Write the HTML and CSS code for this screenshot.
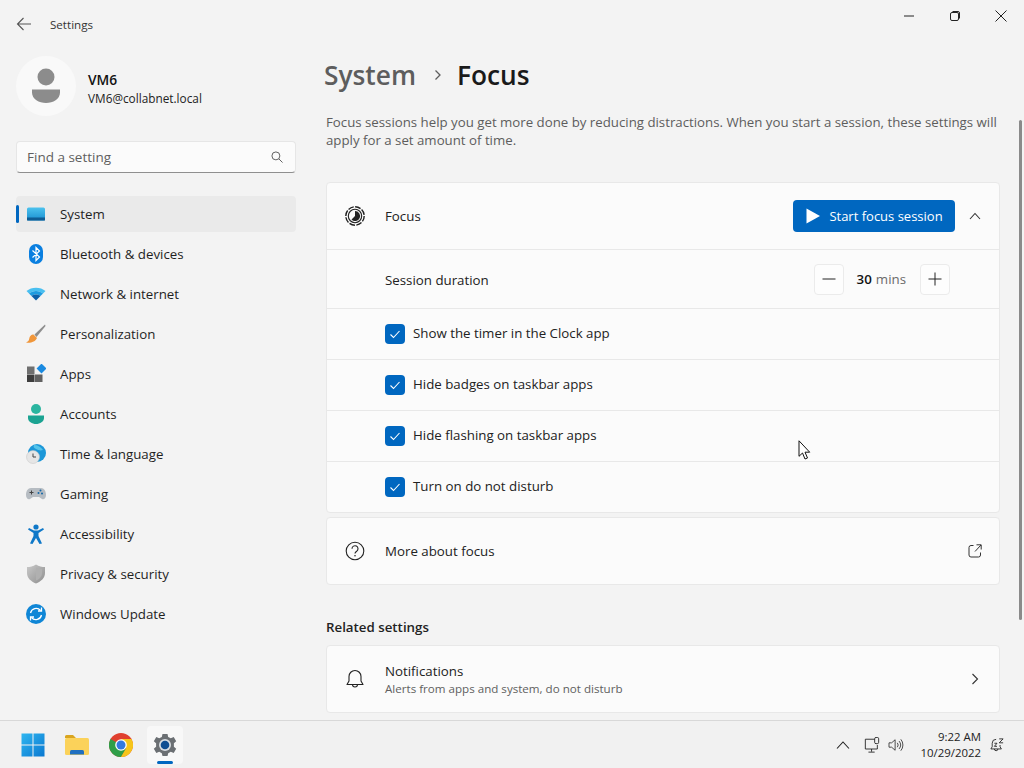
FILE: index.html
```html
<!DOCTYPE html>
<html lang="en">
<head>
<meta charset="utf-8">
<title>Settings</title>
<link rel="stylesheet" href="styles.css">
</head>
<body>
<div class="window">
  <header class="titlebar">
    <div class="title-left">
      <svg class="back" width="16" height="16" viewBox="0 0 16 16"><path d="M15 8H1.500M7.500 2L1.500 8l6 6" fill="none" stroke="#555" stroke-width="1.100"/></svg>
      <span class="app-name">Settings</span>
    </div>
    <div class="controls">
      <div class="ctl"><svg width="12" height="12" viewBox="0 0 12 12"><path d="M1 6h10" stroke="#222" stroke-width="1"/></svg></div>
      <div class="ctl"><svg width="12" height="12" viewBox="0 0 12 12"><rect x="1.500" y="2.500" width="8" height="8" rx="1.500" fill="none" stroke="#222"/><path d="M3.500 1.500h5.500a1.500 1.500 0 0 1 1.500 1.500v5.500" fill="none" stroke="#222"/></svg></div>
      <div class="ctl"><svg width="12" height="12" viewBox="0 0 12 12"><path d="M.5.500l11 11M11.500.500l-11 11" stroke="#222" stroke-width="1"/></svg></div>
    </div>
  </header>
  <div class="body">
    <aside class="sidebar">
      <div class="profile">
        <div class="avatar">
          <svg width="30" height="36" viewBox="0 0 30 36"><circle cx="15" cy="9" r="8.500" fill="#8c8c8c"/><path d="M1 21.500h28v3C29 31 22 35 15 35S1 31 1 24.500z" fill="#8c8c8c"/></svg>
        </div>
        <div class="who">
          <div class="who-name">VM6</div>
          <div class="who-mail">VM6@collabnet.local</div>
        </div>
      </div>
      <div class="search">
        <span class="search-text">Find a setting</span>
        <svg width="12" height="12" viewBox="0 0 13 13"><circle cx="5.300" cy="5.300" r="4.300" fill="none" stroke="#555"/><path d="M8.500 8.500l4 4" stroke="#555"/></svg>
      </div>
      <nav class="nav">
        <div class="nav-item active"><span class="pip"></span>
          <svg class="nav-icon" width="20" height="20" viewBox="0 0 20 20"><defs><linearGradient id="g1" x1="0" y1="0" x2="0" y2="1"><stop offset="0" stop-color="#4cc2ee"/><stop offset="1" stop-color="#1a8fd0"/></linearGradient></defs><rect x="1" y="3.500" width="18" height="13" rx="1.500" fill="url(#g1)"/><rect x="1" y="13.500" width="18" height="3" fill="#0f5c94"/></svg>
          <span>System</span></div>
        <div class="nav-item">
          <svg class="nav-icon" width="20" height="20" viewBox="0 0 20 20"><rect x="3" y="0" width="14" height="20" rx="7" fill="#0a7fe0"/><path d="M6.500 6.500l7 6.500L10 16.500V3.500l3.500 3.500-7 6.500" fill="none" stroke="#fff" stroke-width="1.200"/></svg>
          <span>Bluetooth &amp; devices</span></div>
        <div class="nav-item">
          <svg class="nav-icon" width="20" height="20" viewBox="0 0 20 20"><path d="M0.500 7C5.500 2.500 14.500 2.500 19.500 7l-2.500 2.500C13 6 7 6 3 9.500z" fill="#49bff0"/><path d="M3 9.500C7 6 13 6 17 9.500l-2.500 2.500C12 10 8 10 5.500 12z" fill="#1d9be0"/><path d="M5.500 12C8 10 12 10 14.500 12L10 16.500z" fill="#0c5fa8"/></svg>
          <span>Network &amp; internet</span></div>
        <div class="nav-item">
          <svg class="nav-icon" width="20" height="20" viewBox="0 0 20 20"><path d="M19 0.500L8.500 10.500l2 2.500L19.500 2z" fill="#8d8d8d"/><path d="M7.500 10.500l3.500 3.500C9.500 18 4 19.500 0 18.500c3-1 3-3 3.500-5 .5-2 2.500-3.500 4-3z" fill="#f0963a"/></svg>
          <span>Personalization</span></div>
        <div class="nav-item">
          <svg class="nav-icon" width="20" height="20" viewBox="0 0 20 20"><rect x="1" y="2.500" width="7.500" height="7.500" fill="#6f6f6f"/><rect x="1" y="10.500" width="7.500" height="7.500" fill="#3d3d3d"/><rect x="9" y="10.500" width="7.500" height="7.500" fill="#616161"/><rect x="12" y="1" width="7" height="7" transform="rotate(45 15.500 4.500)" fill="#1a8ae0"/></svg>
          <span>Apps</span></div>
        <div class="nav-item">
          <svg class="nav-icon" width="20" height="20" viewBox="0 0 20 20"><circle cx="10" cy="5" r="5" fill="#2bb5a0"/><path d="M2 11.500h16v2.500c0 3.500-4 6-8 6s-8-2.500-8-6z" fill="#1ba392"/></svg>
          <span>Accounts</span></div>
        <div class="nav-item">
          <svg class="nav-icon" width="20" height="20" viewBox="0 0 20 20"><circle cx="11" cy="9" r="9" fill="#1c97d8"/><path d="M8 1c4 0 7 2 9 5-3 1-5 0-7-1S7 3 8 1z" fill="#55c4ea"/><circle cx="7" cy="13" r="6.500" fill="#e6e6e6" stroke="#c4c4c4" stroke-width=".5"/><path d="M7 9.500V13h3" fill="none" stroke="#444" stroke-width="1"/></svg>
          <span>Time &amp; language</span></div>
        <div class="nav-item">
          <svg class="nav-icon" width="20" height="20" viewBox="0 0 20 20"><path d="M5 4h10c3 0 5 3 5 7 0 3-2 5-4 4l-3-2H7l-3 2c-2 1-4-1-4-4 0-4 2-7 5-7z" fill="#b6bcc2"/><path d="M3.500 8.500h4M5.500 6.500v4" stroke="#444" stroke-width="1"/><circle cx="14.500" cy="6.500" r="1" fill="#1267a8"/><circle cx="12.500" cy="9" r="1" fill="#1267a8"/><circle cx="16" cy="9.500" r="1" fill="#1267a8"/></svg>
          <span>Gaming</span></div>
        <div class="nav-item">
          <svg class="nav-icon" width="20" height="20" viewBox="0 0 20 20"><circle cx="10" cy="3" r="2.600" fill="#0f78c8"/><path d="M2 5.500l1-1.500 5 2.500h4l5-2.500 1 1.500-5.500 3.500v3L16 19.500l-2.500.5L10 14l-3.500 6-2.500-.5L7.500 12V9z" fill="#0f78c8"/></svg>
          <span>Accessibility</span></div>
        <div class="nav-item">
          <svg class="nav-icon" width="20" height="20" viewBox="0 0 20 20"><defs><linearGradient id="g2" x1="0" y1="0" x2="1" y2="1"><stop offset="0" stop-color="#c9c9c9"/><stop offset="1" stop-color="#8e8e8e"/></linearGradient></defs><path d="M10 0.500c3 2 6 2.500 9 2.500v6c0 5-4 8.500-9 10.500C5 17.500 1 14 1 9V3c3 0 6-.5 9-2.500z" fill="url(#g2)"/><path d="M10 3.500c2 1 4 1.500 6 1.500v4c0 3.500-2.500 6-6 7.500z" fill="#b0b0b0"/></svg>
          <span>Privacy &amp; security</span></div>
        <div class="nav-item">
          <svg class="nav-icon" width="20" height="20" viewBox="0 0 20 20"><circle cx="10" cy="10" r="10" fill="#0f86d6"/><path d="M4.500 9a5.700 5.700 0 0 1 10-2.500M15.500 11a5.700 5.700 0 0 1-10 2.500" fill="none" stroke="#fff" stroke-width="1.300"/><path d="M15.500 3.500v3.500H12M4.500 16.500V13H8" fill="none" stroke="#fff" stroke-width="1.300"/></svg>
          <span>Windows Update</span></div>
      </nav>
    </aside>
    <main class="main">
      <h1 class="crumbs"><span class="crumb-parent">System</span>
        <svg class="crumb-sep" width="10" height="12" viewBox="0 0 10 12"><path d="M2.500 1.500L7 6l-4.500 4.500" fill="none" stroke="#5d5d5d" stroke-width="1.300"/></svg>
        <span class="crumb-current">Focus</span></h1>
      <p class="desc">Focus sessions help you get more done by reducing distractions. When you start a session, these settings will apply for a set amount of time.</p>
      <section class="card">
        <div class="row row-head">
          <svg class="row-icon" width="20" height="20" viewBox="0 0 20 20"><circle cx="10" cy="10" r="9.200" fill="none" stroke="#222" stroke-width="1.400" stroke-dasharray="5.800 1.400"/><circle cx="10" cy="10" r="6.700" fill="none" stroke="#222" stroke-width="1.100"/><path d="M10 5a5 5 0 1 1-3.500 8.500L10 10z" fill="#222"/></svg>
          <span class="row-label">Focus</span>
          <button class="primary"><svg width="16" height="16" viewBox="0 0 16 16"><path d="M1.500 .5l13.500 7.500-13.500 7.500z" fill="#fff"/></svg>Start focus session</button>
          <svg class="chev-up" width="12" height="8" viewBox="0 0 12 8"><path d="M1 7l5-5.500L11 7" fill="none" stroke="#333" stroke-width="1.100"/></svg>
        </div>
        <div class="row row-duration">
          <span class="row-label">Session duration</span>
          <div class="stepper">
            <div class="step"><svg width="14" height="14" viewBox="0 0 14 14"><path d="M0.500 7h13" stroke="#222"/></svg></div>
            <span class="num">30</span><span class="unit">mins</span>
            <div class="step"><svg width="14" height="14" viewBox="0 0 14 14"><path d="M0.500 7h13M7 .5v13" stroke="#222"/></svg></div>
          </div>
        </div>
        <div class="row row-check"><span class="box"><svg width="12" height="12" viewBox="0 0 12 12"><path d="M1.500 6.500l3 3 6-6.500" fill="none" stroke="#fff" stroke-width="1.100"/></svg></span><span class="row-label">Show the timer in the Clock app</span></div>
        <div class="row row-check"><span class="box"><svg width="12" height="12" viewBox="0 0 12 12"><path d="M1.500 6.500l3 3 6-6.500" fill="none" stroke="#fff" stroke-width="1.100"/></svg></span><span class="row-label">Hide badges on taskbar apps</span></div>
        <div class="row row-check"><span class="box"><svg width="12" height="12" viewBox="0 0 12 12"><path d="M1.500 6.500l3 3 6-6.500" fill="none" stroke="#fff" stroke-width="1.100"/></svg></span><span class="row-label">Hide flashing on taskbar apps</span></div>
        <div class="row row-check"><span class="box"><svg width="12" height="12" viewBox="0 0 12 12"><path d="M1.500 6.500l3 3 6-6.500" fill="none" stroke="#fff" stroke-width="1.100"/></svg></span><span class="row-label">Turn on do not disturb</span></div>
      </section>
      <section class="card card-more">
        <div class="row row-link">
          <svg class="row-icon" width="20" height="20" viewBox="0 0 20 20"><circle cx="10" cy="10" r="8.800" fill="none" stroke="#222" stroke-width="1.100"/><path d="M7 7.700a3 3 0 1 1 4.700 2.500c-1.100.7-1.700 1.300-1.700 2.300" fill="none" stroke="#222" stroke-width="1.100"/><circle cx="10" cy="14.800" r=".8" fill="#222"/></svg>
          <span class="row-label">More about focus</span>
          <svg class="tail" width="14" height="14" viewBox="0 0 14 14"><path d="M5.500 1.500H3A2 2 0 0 0 1 3.500V11a2 2 0 0 0 2 2h7.500a2 2 0 0 0 2-2V8.500" fill="none" stroke="#333" stroke-width="1"/><path d="M7 7.500L13 1M8.500 .8h4.700v4.700" fill="none" stroke="#333" stroke-width="1"/></svg>
        </div>
      </section>
      <h2 class="section-title">Related settings</h2>
      <section class="card">
        <div class="row row-link">
          <svg class="row-icon" width="20" height="20" viewBox="0 0 20 20"><path d="M10 1.500a6 6 0 0 0-6 6v4.500L2 15.500h16L16 12V7.500a6 6 0 0 0-6-6z" fill="none" stroke="#222" stroke-width="1.100" stroke-linejoin="round"/><path d="M7.500 15.500a2.500 2.500 0 0 0 5 0" fill="none" stroke="#222" stroke-width="1.100"/></svg>
          <div class="stack">
            <span class="row-label">Notifications</span>
            <span class="row-sub">Alerts from apps and system, do not disturb</span>
          </div>
          <svg class="tail tail-chev" width="8" height="12" viewBox="0 0 8 12"><path d="M1.500 1L6.500 6l-5 5" fill="none" stroke="#333" stroke-width="1.100"/></svg>
        </div>
      </section>
    </main>
  </div>
  <div class="scrollbar"></div>
  <svg class="cursor" width="13" height="20" viewBox="0 0 13 20"><path d="M1 .8v15.500l3.500-3.300 2.500 6 2.500-1-2.500-5.800h4.700z" fill="#fff" stroke="#111" stroke-width="1"/></svg>
</div>
<footer class="taskbar">
  <div class="apps">
    <div class="app"><svg width="24" height="24" viewBox="0 0 24 24"><defs><linearGradient id="g3" x1="0" y1="0" x2="1" y2="1"><stop offset="0" stop-color="#2fb6f0"/><stop offset="1" stop-color="#0a78d0"/></linearGradient></defs><path d="M.5.500h11v11H.500zM12.500.500h11v11h-11zM.5 12.500h11v11H.500zM12.500 12.500h11v11h-11z" fill="url(#g3)"/></svg></div>
    <div class="app"><svg width="26" height="22" viewBox="0 0 26 22"><path d="M1 2.500A1.500 1.500 0 0 1 2.500 1H9l3 3h-11z" fill="#d9a520"/><rect x="1" y="4" width="24" height="17" rx="1.500" fill="#fbd25a"/><path d="M6 20.500v-3A1.500 1.500 0 0 1 7.500 16h11a1.500 1.500 0 0 1 1.500 1.500v3z" fill="#1f6fc0"/></svg></div>
    <div class="app"><svg width="24" height="24" viewBox="0 0 24 24"><circle cx="12" cy="12" r="12" fill="#e0402f"/><path d="M12 12L1.600 6A12 12 0 0 0 12 24l5-8z" fill="#2f9e48"/><path d="M12 6h10.400A12 12 0 0 1 12 24l5.200-9z" fill="#f6c51a"/><circle cx="12" cy="12" r="5.800" fill="#fff"/><circle cx="12" cy="12" r="4.500" fill="#3279e0"/></svg></div>
    <div class="app app-on">
      <svg width="24" height="24" viewBox="0 0 24 24"><path d="M9.500 1h5l.7 3 2.600 1.200 2.900-1.200 2.500 4.300-2.300 2v3.400l2.300 2-2.500 4.300-2.900-1.200-2.600 1.500-.7 2.700h-5l-.7-2.700-2.600-1.500-2.900 1.200-2.500-4.300 2.300-2v-3.400l-2.300-2 2.500-4.300 2.900 1.200L8.800 4z" fill="#6b6f73"/><circle cx="12" cy="12" r="6" fill="#d8dde2"/><circle cx="12" cy="12" r="4.300" fill="#0f4e92"/></svg>
      <span class="app-pip"></span>
    </div>
  </div>
  <div class="tray">
    <svg class="tray-chev" width="14" height="8" viewBox="0 0 14 8"><path d="M1 7.500l6-6.500 6 6.500" fill="none" stroke="#222" stroke-width="1.100"/></svg>
    <svg class="tray-net" width="16" height="16" viewBox="0 0 18 18"><path d="M12 2.500H1.500v11H15V9" fill="none" stroke="#222"/><rect x="12" y=".5" width="4.500" height="7" rx="1.500" fill="none" stroke="#222"/><path d="M8.500 13.500v3M5 17h7" stroke="#222"/></svg>
    <svg class="tray-vol" width="16" height="14" viewBox="0 0 18 16"><path d="M1 5.500h3L8 2v12L4 10.500H1z" fill="none" stroke="#222" stroke-width=".9"/><path d="M10.500 5.500a4 4 0 0 1 0 5M12.500 3.500a7 7 0 0 1 0 9M14.500 1.500a10 10 0 0 1 0 13" fill="none" stroke="#222" stroke-width=".9"/></svg>
    <div class="clock"><span>9:22 AM</span><span>10/29/2022</span></div>
    <svg class="tray-bell" width="14" height="14" viewBox="0 0 16 16"><path d="M7 1.500a4.500 4.500 0 0 0-4.500 4.500v4L1 12.500h12L11.500 10V8" fill="none" stroke="#222" stroke-width="1"/><path d="M5 12.500a2 2 0 0 0 4 0" fill="none" stroke="#222" stroke-width="1"/><path d="M5 6h3L5 9.500h3M10.500 1H15l-4.500 4.500H15" fill="none" stroke="#222" stroke-width="1"/></svg>
  </div>
</footer>
</body>
</html>
```
FILE: styles.css
```css
* { box-sizing: border-box; }
html, body { margin: 0; padding: 0; }
body {
  width: 1024px;
  height: 768px;
  overflow: hidden;
  background: #f3f3f3;
  color: #1b1b1b;
  font-family: "Open Sans", "Noto Sans", "Liberation Sans", sans-serif;
  font-size: 13.300px;
  display: flex;
  flex-direction: column;
}
.window { position: relative; height: 720px; display: flex; flex-direction: column; overflow: hidden; }
.titlebar { height: 48px; flex: none; display: flex; justify-content: space-between; align-items: flex-start; }
.title-left { display: flex; align-items: center; height: 48px; padding-left: 16px; }
.back { margin-right: 18px; }
.app-name { font-size: 11.600px; color: #333; }
.controls { display: flex; }
.ctl { width: 46px; height: 31px; display: flex; align-items: center; justify-content: center; }
.body { flex: 1; display: flex; min-height: 0; }
.sidebar { width: 326px; flex: none; padding: 8px 30px 0 16px; }
.profile { display: flex; align-items: center; gap: 12px; height: 60px; }
.avatar { width: 60px; height: 60px; border-radius: 50%; background: #f9f9f9; display: flex; align-items: center; justify-content: center; flex: none; }
.who { margin-top: 6px; }
.who-name { font-weight: 600; font-size: 13.800px; line-height: 18px; color: #111; }
.who-mail { font-size: 11.800px; line-height: 18px; color: #222; }
.search {
  margin-top: 25px; height: 32px; background: #fbfbfb; border: 1px solid #e6e6e6; border-bottom: 1px solid #8f8f8f;
  border-radius: 4px; display: flex; align-items: center; justify-content: space-between; padding: 0 12px 0 10px;
}
.search-text { color: #5f5f5f; font-size: 13.500px; }
.nav { margin-top: 23px; display: flex; flex-direction: column; gap: 4px; }
.nav-item { position: relative; height: 36px; display: flex; align-items: center; padding-left: 10px; border-radius: 4px; color: #1f1f1f; }
.nav-item.active { background: #eaeaea; }
.nav-icon { margin-right: 14px; flex: none; }
.pip { position: absolute; left: 0; top: 9px; width: 3px; height: 18px; border-radius: 2px; background: #0067c0; }
.main { flex: 1; min-width: 0; padding-right: 24px; }
.crumbs { margin: 7px 0 0 -2px; height: 40px; display: flex; align-items: center; font-size: 26.300px; font-weight: 600; }
.crumb-parent { color: #5d5d5d; }
.crumb-sep { margin: 0 14px 0 17px; }
.crumb-current { color: #1a1a1a; }
.desc { margin: 18px 0 0; font-size: 13.250px; line-height: 18px; color: #5d5d5d; width: 680px; }
.card { background: #fbfbfb; border: 1px solid #e8e8e8; border-radius: 4px; }
.desc + .card { margin-top: 33px; }
.card-more { margin-top: 4px; }
.row { display: flex; align-items: center; padding: 0 17px 0 58px; border-bottom: 1px solid #e8e8e8; }
.row:last-child { border-bottom: 0; }
.row-icon { margin-left: -40px; margin-right: 20px; flex: none; }
.row-label { font-size: 13.300px; color: #222; }
.row-head { height: 67px; justify-content: flex-start; }
.row-head .row-label { flex: 1; }
.primary {
  height: 32px; width: 162px; background: #0067c0; color: #fff; border: 0; border-radius: 4px; font: inherit; font-size: 13px;
  display: flex; align-items: center; justify-content: center; gap: 8px; padding: 0; margin-right: 14px;
}
.chev-up { margin-right: 1px; }
.row-duration { height: 59px; justify-content: space-between; padding-right: 49px; }
.row-duration .row-label { margin-top: 2px; }
.stepper { display: flex; align-items: center; }
.step { width: 30px; height: 31px; background: #fdfdfd; border: 1px solid #ebebeb; border-radius: 4px; display: flex; align-items: center; justify-content: center; }
.num { font-weight: 600; margin-left: 13px; color: #111; }
.unit { color: #6a6a6a; margin: 0 14px 0 4px; }
.row-check { height: 51px; gap: 8px; }
.row-check:last-child { height: 50px; }
.row-check .row-label { margin-top: -2px; }
.box { width: 20px; height: 20px; border-radius: 4px; background: #0067c0; display: flex; align-items: center; justify-content: center; flex: none; }
.row-link { height: 66px; }
.row-link > .row-label, .stack { flex: 1; }
.tail-chev { margin-right: 3px; }
.stack { display: flex; flex-direction: column; }
.row-sub { font-size: 11.600px; color: #606060; line-height: 16px; margin-top: 1px; }
.stack .row-label { line-height: 18px; }
.section-title { margin: 33px 0 9px; font-size: 13.300px; line-height: 18px; font-weight: 600; color: #222; }
.scrollbar { position: absolute; left: 1019px; top: 120px; width: 2.500px; height: 500px; background: #8a8a8a; border-radius: 2px; }
.cursor { position: absolute; left: 798px; top: 440px; }
.taskbar { height: 48px; flex: none; background: #f1f1f1; border-top: 1px solid #d8d8d8; display: flex; justify-content: space-between; align-items: center; padding: 0 20px 0 15px; }
.apps { display: flex; gap: 8px; align-items: center; }
.app { position: relative; width: 36px; height: 38px; border-radius: 4px; display: flex; align-items: center; justify-content: center; }
.app-on { background: #f8f8f8; }
.app-pip { position: absolute; left: 10px; bottom: 0; width: 16px; height: 3px; border-radius: 2px; background: #0067c0; }
.tray { display: flex; align-items: center; }
.tray-chev { margin-right: 14px; }
.tray-net { margin-right: 8px; }
.tray-vol { margin-right: 17px; }
.clock { display: flex; flex-direction: column; align-items: flex-end; font-size: 11.400px; line-height: 16px; color: #222; margin-right: 9px; }
```
